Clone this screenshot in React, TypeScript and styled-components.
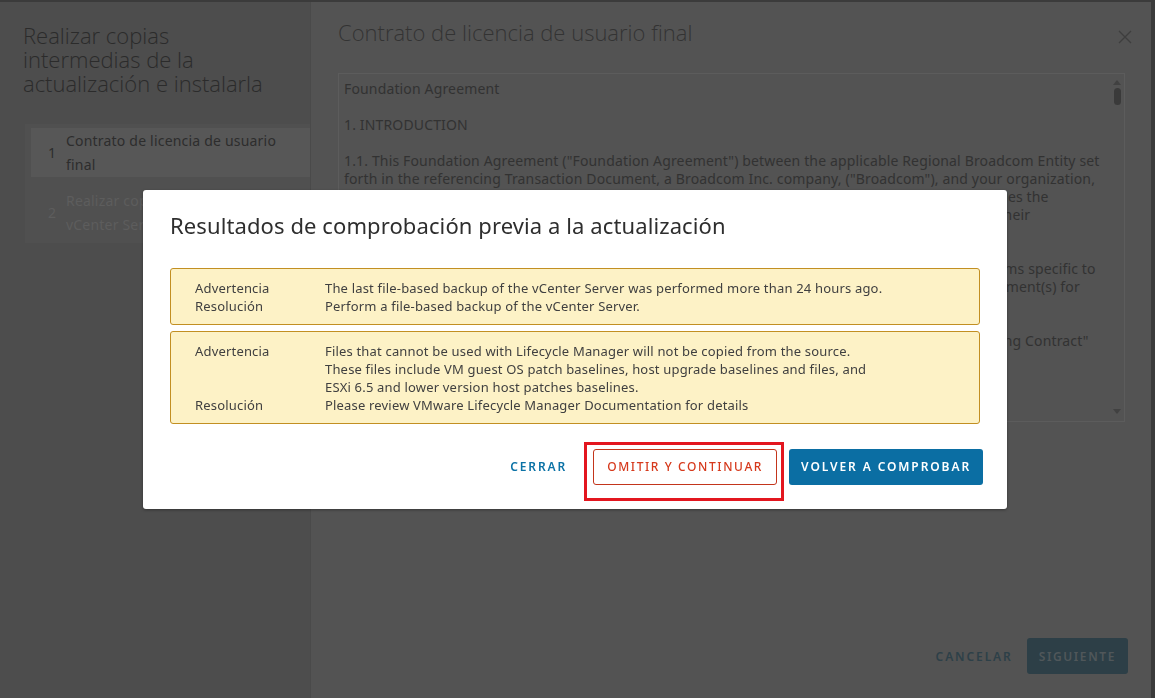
import React from 'react'
import styled, { createGlobalStyle } from 'styled-components'

const GlobalStyle = createGlobalStyle`
  html, body {
    margin: 0;
    padding: 0;
    background: #3b3b3b;
    font-family: 'Noto Sans', 'Open Sans', sans-serif;
    overflow: hidden;
  }
  * { box-sizing: border-box; }
`

const Wizard = styled.div`
  display: flex;
  width: 1151px;
  height: 696px;
  margin-top: 2px;
  background: #535353;
`

const Sidebar = styled.nav`
  width: 311px;
  flex-shrink: 0;
  background: #4d4d4d;
  border-right: 1px solid #4a4a4a;
  padding: 21px 0 0 23px;
`

const WizardTitle = styled.h1`
  margin: 0 0 29px;
  font-family: 'Open Sans', 'Noto Sans', sans-serif;
  font-size: 22px;
  line-height: 24px;
  font-weight: 300;
  color: #2b2b2b;
`

const StepList = styled.ol`
  list-style: none;
  display: flex;
  flex-direction: column;
  gap: 11px;
  margin: 0 0 0 2px;
  padding: 4px 0 6px 6px;
  background: #505050;
`

const StepItem = styled.li<{ active?: boolean; disabled?: boolean }>`
  display: flex;
  align-items: center;
  min-height: 49px;
  padding: 0 0 0 17px;
  background: ${({ active }) => (active ? '#575757' : 'transparent')};
  color: ${({ disabled }) => (disabled ? '#5d5d5d' : '#2d2d2d')};
  font-size: 14px;
  line-height: 24px;
  letter-spacing: 0.2px;
`

const StepNumber = styled.span`
  width: 18px;
  flex-shrink: 0;
`

const Main = styled.section`
  flex: 1;
  display: flex;
  flex-direction: column;
  padding: 15px 23px 24px 27px;
`

const MainHeader = styled.header`
  display: flex;
  align-items: center;
  justify-content: space-between;
  margin-right: 3px;
`

const MainTitle = styled.h2`
  margin: 0;
  font-family: 'Open Sans', 'Noto Sans', sans-serif;
  font-size: 22px;
  line-height: 30px;
  font-weight: 300;
  color: #333333;
`

const CloseButton = styled.button`
  border: none;
  background: none;
  padding: 0;
  margin: 10px -8px 0 0;
  width: 16px;
  height: 16px;
  display: flex;
`

const LicenseBox = styled.div`
  position: relative;
  margin: 26px 3px 0 0;
  height: 349px;
  border: 1px solid #5c5c5c;
  padding: 6px 20px 0 5px;
  overflow: hidden;
  color: #323232;
  font-size: 14px;
  line-height: 18px;
  letter-spacing: 0.15px;
`

const Paragraph = styled.p`
  margin: 0 0 18px;
  white-space: nowrap;
`

const Line = styled.span`
  display: block;
`

const Scrollbar = styled.div`
  position: absolute;
  top: 0;
  right: 0;
  bottom: 0;
  width: 14px;
  display: flex;
  flex-direction: column;
  align-items: center;
  justify-content: space-between;
  padding: 6px 0 7px;
`

const ScrollThumb = styled.div`
  width: 7px;
  height: 17px;
  border-radius: 4px;
  background: #3a3a3a;
  margin-top: 3px;
`

const Arrow = styled.span<{ down?: boolean }>`
  width: 0;
  height: 0;
  border-left: 4px solid transparent;
  border-right: 4px solid transparent;
  ${({ down }) => (down ? 'border-top: 5px solid #414141;' : 'border-bottom: 5px solid #414141;')}
`

const ScrollTrack = styled.div`
  flex: 1;
  display: flex;
  flex-direction: column;
  align-items: center;
`

const WizardFooter = styled.footer`
  margin-top: auto;
  display: flex;
  justify-content: flex-end;
  align-items: center;
  gap: 2px;
`

const FlatButton = styled.button<{ tone: string }>`
  height: 36px;
  padding: 0 12px;
  border: none;
  background: none;
  font-family: inherit;
  font-size: 12px;
  font-weight: 600;
  letter-spacing: 1.9px;
  text-transform: uppercase;
  color: ${({ tone }) => tone};
`

const SolidButton = styled.button<{ bg: string; fg: string; spacing?: number }>`
  height: 36px;
  padding: 0 12px;
  border: none;
  border-radius: 3px;
  background: ${({ bg }) => bg};
  color: ${({ fg }) => fg};
  font-family: inherit;
  font-size: 12px;
  font-weight: 600;
  letter-spacing: ${({ spacing }) => spacing ?? 1.9}px;
  text-transform: uppercase;
`

const OutlineButton = styled.button`
  height: 36px;
  padding: 0 13px;
  border: 1px solid #c3351b;
  border-radius: 3px;
  background: #fff;
  color: #d6391c;
  font-family: inherit;
  font-size: 12px;
  font-weight: 500;
  letter-spacing: 1.6px;
  text-transform: uppercase;
`

const Backdrop = styled.div`
  position: fixed;
  inset: 0;
  display: flex;
  align-items: center;
  justify-content: center;
`

const Dialog = styled.div`
  width: 864px;
  margin: 0 0 0 -5px;
  background: #fff;
  border-radius: 3px;
  box-shadow: 0 1px 3px rgba(0, 0, 0, 0.35);
  padding: 20px 24px 24px 27px;
`

const DialogTitle = styled.h3`
  margin: 0 0 28px;
  font-size: 22px;
  line-height: 30px;
  font-weight: 400;
  letter-spacing: 0.1px;
  color: #2e2e2e;
`

const AlertList = styled.div`
  display: flex;
  flex-direction: column;
  gap: 6px;
  margin-right: 3px;
`

const Alert = styled.div`
  display: grid;
  grid-template-columns: 130px 1fr;
  padding: 10px 24px 9px 24px;
  background: #fdf2c6;
  border: 1px solid #c28f22;
  border-radius: 3px;
  color: #404040;
  font-size: 13px;
  line-height: 18px;
  letter-spacing: 0.18px;
`

const DialogFooter = styled.div`
  display: flex;
  justify-content: flex-end;
  align-items: center;
  gap: 12px;
  margin-top: 25px;
`

const Highlighted = styled.span`
  position: relative;
  display: inline-flex;
  margin-left: 2px;
`

const HighlightFrame = styled.span`
  position: absolute;
  top: -7px;
  left: -9px;
  right: -7px;
  bottom: -16px;
  border: 3px solid #e3161f;
  pointer-events: none;
`

const licenseParagraphs: string[][] = [
  ['Foundation Agreement'],
  ['1. INTRODUCTION'],
  [
    '1.1. This Foundation Agreement ("Foundation Agreement") between the applicable Regional Broadcom Entity set',
    'forth in the referencing Transaction Document, a Broadcom Inc. company, ("Broadcom"), and your organization,',
    '("Customer") and governs Customer\'s use of the Offerings when the Transaction Document identifies the',
    'Offerings purchased by Customer, and the Broadcom Entity and its Affiliates who will perform for their',
    'customers.',
  ],
  [
    '1.2. This Foundation Agreement contains the general terms and conditions; any of the Offering terms specific to',
    'the Offerings will be described in the applicable Exhibit(s), and in the referencing Transaction Document(s) for',
    'each Offering purchased.',
  ],
  [
    '1.3. The Agreement, Exhibits and Transaction Documents form the whole agreement (the "Governing Contract"',
    'or "Agreement").',
  ],
  ['2. DEFINITIONS'],
]

const CloseIcon = () => (
  <svg width="16" height="16" viewBox="0 0 16 16">
    <path d="M2 2 L14 14 M14 2 L2 14" stroke="#3e3e3e" strokeWidth="1.3" fill="none" />
  </svg>
)

export default function App() {
  return (
    <>
      <GlobalStyle />
      <Wizard>
        <Sidebar>
          <WizardTitle>
            Realizar copias
            <br />
            intermedias de la
            <br />
            actualización e instalarla
          </WizardTitle>
          <StepList>
            <StepItem active>
              <StepNumber>1</StepNumber>
              <span>
                Contrato de licencia de usuario
                <br />
                final
              </span>
            </StepItem>
            <StepItem disabled>
              <StepNumber>2</StepNumber>
              <span>
                Realizar copias intermedias del
                <br />
                vCenter Server
              </span>
            </StepItem>
          </StepList>
        </Sidebar>
        <Main>
          <MainHeader>
            <MainTitle>Contrato de licencia de usuario final</MainTitle>
            <CloseButton aria-label="Cerrar">
              <CloseIcon />
            </CloseButton>
          </MainHeader>
          <LicenseBox>
            {licenseParagraphs.map((lines, i) => (
              <Paragraph key={i}>
                {lines.map((l, j) => (
                  <Line key={j}>{l}</Line>
                ))}
              </Paragraph>
            ))}
            <Scrollbar>
              <ScrollTrack>
                <Arrow />
                <ScrollThumb />
              </ScrollTrack>
              <Arrow down />
            </Scrollbar>
          </LicenseBox>
          <WizardFooter>
            <FlatButton tone="#2d4048">Cancelar</FlatButton>
            <SolidButton bg="#2d3f47" fg="#50575a" spacing={1.6}>
              Siguiente
            </SolidButton>
          </WizardFooter>
        </Main>
      </Wizard>

      <Backdrop>
        <Dialog role="dialog">
          <DialogTitle>Resultados de comprobación previa a la actualización</DialogTitle>
          <AlertList>
            <Alert>
              <span>Advertencia</span>
              <span>The last file-based backup of the vCenter Server was performed more than 24 hours ago.</span>
              <span>Resolución</span>
              <span>Perform a file-based backup of the vCenter Server.</span>
            </Alert>
            <Alert>
              <span>Advertencia</span>
              <span>
                Files that cannot be used with Lifecycle Manager will not be copied from the source.
                <br />
                These files include VM guest OS patch baselines, host upgrade baselines and files, and
                <br />
                ESXi 6.5 and lower version host patches baselines.
              </span>
              <span>Resolución</span>
              <span>Please review VMware Lifecycle Manager Documentation for details</span>
            </Alert>
          </AlertList>
          <DialogFooter>
            <FlatButton tone="#0b72a6">Cerrar</FlatButton>
            <Highlighted>
              <OutlineButton>Omitir y continuar</OutlineButton>
              <HighlightFrame />
            </Highlighted>
            <SolidButton bg="#0b6ea3" fg="#ffffff">
              Volver a comprobar
            </SolidButton>
          </DialogFooter>
        </Dialog>
      </Backdrop>
    </>
  )
}
